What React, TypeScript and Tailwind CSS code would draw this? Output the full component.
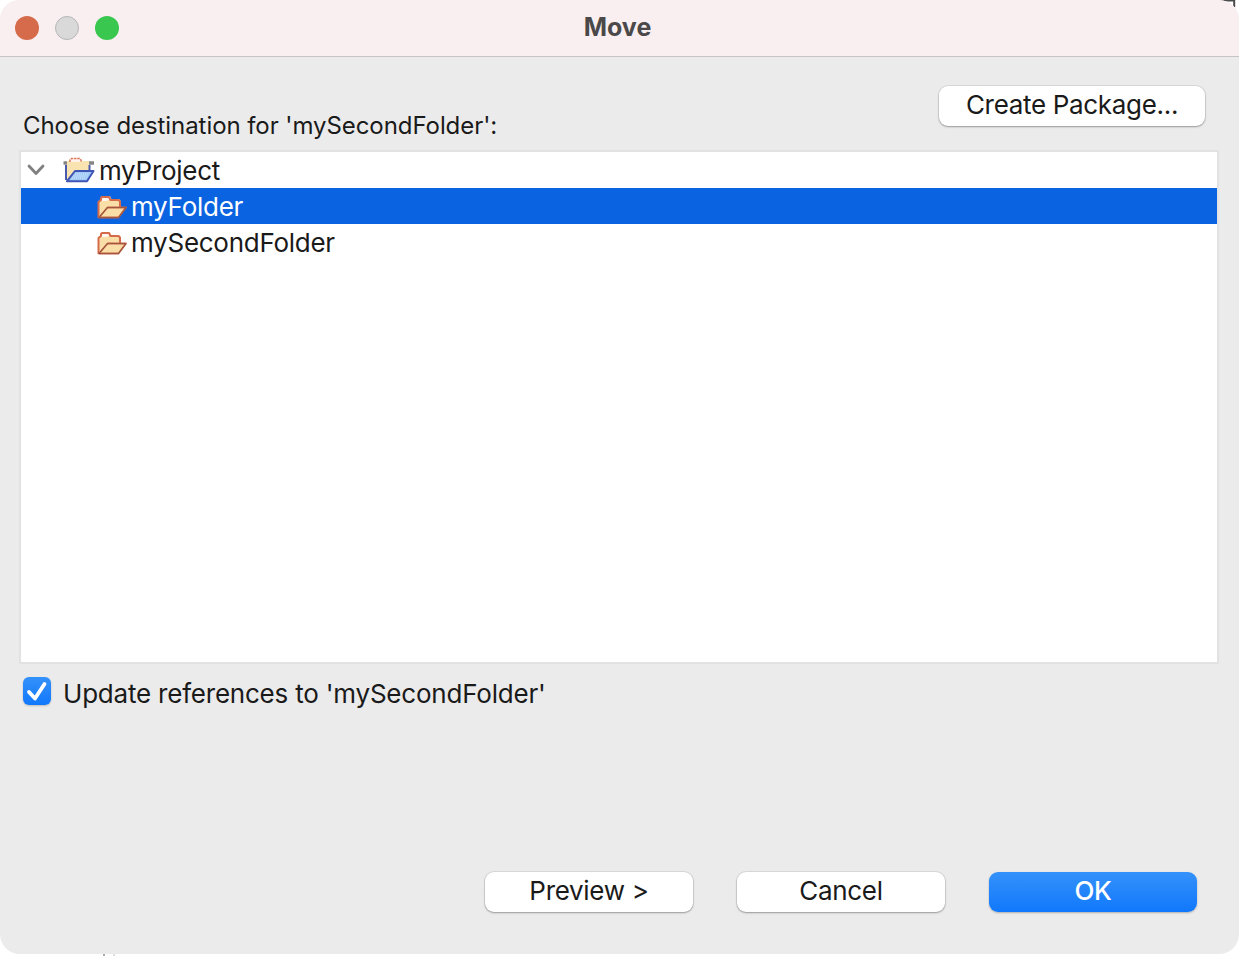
import type { ReactNode } from 'react';

function ProjectIcon() {
  return (
    <svg width="32" height="26" viewBox="0 0 32 26" className="shrink-0">
      <path d="M0.500 6H31" stroke="#858585" strokeWidth="3.600" />
      <path d="M4 4h3l1.500-2h8L18 4h8v11L4 24z" fill="#f9e3b0" />
      <path d="M7 5V3l1.500-1.500h8L18 3v2z" fill="#fff1ec" />
      <path d="M7 5V3l1.500-1.500h8L18 3v2" fill="none" stroke="#dc7a5d" strokeWidth="1.600" strokeDasharray="2.500 0.800" />
      <path d="M3 8v15M26.500 8v5" fill="none" stroke="#4a5aae" strokeWidth="2" />
      <path d="M4 24.200L12 14H30.500L24 24.200z" fill="#a4cbf5" stroke="#3f55b5" strokeWidth="2" strokeLinejoin="round" />
      <path d="M12 17h14M10.500 19h14M9 21h14" stroke="#d0e6ff" strokeWidth="1" strokeDasharray="1 1" />
    </svg>
  );
}

function FolderIcon() {
  return (
    <svg width="32" height="26" viewBox="0 0 32 26" className="mt-1 shrink-0">
      <path d="M3 22.500L2 6.500L4.500 4V2.500L6 1h8l1.500 3H23l1.500 1.500V12L5 23z" fill="#f9dfa7" />
      <path d="M5.500 2.500h8v2l-3 1.500H5z" fill="#fff7f2" />
      <path d="M2.500 23V7L5 5V3l1-1h7l1.500 3h8L24 6.500V12" fill="none" stroke="#d66b4c" strokeWidth="2" strokeLinejoin="round" />
      <path d="M3 22.500L11.500 12.500H30L22.500 22.500z" fill="#f9dfa7" stroke="#c86042" strokeWidth="1.800" strokeLinejoin="round" />
      <path d="M3 22.500L11.500 12.500H30L22.500 22.500z" fill="none" stroke="#594a42" strokeOpacity="0.7" strokeWidth="1.200" strokeDasharray="1 1" />
    </svg>
  );
}

function Button({ children, className }: { children: ReactNode; className: string }) {
  return (
    <button
      className={`flex h-10 items-center justify-center rounded-[9px] pb-[2px] text-[26px] leading-none whitespace-nowrap ${className}`}
    >
      {children}
    </button>
  );
}

const plain = 'bg-white shadow-[0_0_0_1px_rgba(0,0,0,0.07),0_1px_2px_rgba(0,0,0,0.3)]';

export default function App() {
  return (
    <div className="relative h-[956px] w-[1240px] overflow-hidden bg-white font-['Inter','Liberation_Sans',sans-serif] text-[#1a1a1a]">
      <svg width="24" height="8" viewBox="0 0 24 8" className="absolute top-0 left-[1216px]">
        <path d="M2 0.500H18.200V7" fill="none" stroke="#4a4a4a" strokeWidth="2" />
      </svg>
      <svg width="14" height="2" viewBox="0 0 14 2" className="absolute top-[954px] left-[102px]">
        <path d="M1 0h2v2H1z" fill="#a8a8a8" />
        <path d="M11 0h2v2h-2z" fill="#dedede" />
      </svg>
      <div className="relative flex h-[954px] w-[1239px] flex-col overflow-hidden rounded-[20px] bg-[#ebebeb]">
        <header className="grid h-[57px] shrink-0 grid-cols-3 items-center border-b border-[#c8c3c5] bg-[#f9eff0]">
          <div className="flex gap-4 pl-[15px]">
            <span className="size-6 rounded-full bg-[#d66b4c]" />
            <span className="size-6 rounded-full border border-[#b5b5b7] bg-[#d9d9d9]" />
            <span className="size-6 rounded-full bg-[#39c750]" />
          </div>
          <h1 className="pr-[4px] pb-[2px] text-center text-[25px] leading-none font-bold text-[#4a4848]">Move</h1>
        </header>

        <div className="flex h-[93px] shrink-0 items-start justify-between pr-[34px] pl-[23px]">
          <label className="pt-[57px] text-[24px] leading-6 tracking-[-0.07px] whitespace-nowrap">
            Choose destination for 'mySecondFolder':
          </label>
          <Button className={`mt-[29px] w-[266px] tracking-[-0.32px] ${plain}`}>Create Package...</Button>
        </div>

        <div className="mr-5 ml-[19px] h-[514px] shrink-0 border-2 border-[#e2e2e2] bg-white text-[26px] leading-9 tracking-[-0.27px]">
          <div className="flex h-9 items-center pl-[6px]">
            <svg width="18" height="12" viewBox="0 0 18 12" className="mr-[18px] shrink-0">
              <path d="M2 2l7 7.500L16 2" fill="none" stroke="#808080" strokeWidth="2.800" strokeLinecap="round" strokeLinejoin="round" />
            </svg>
            <ProjectIcon />
            <span className="ml-1 pt-[2px]">myProject</span>
          </div>
          <div className="flex h-9 items-center bg-[#0a63e0] pl-[75px] text-white">
            <FolderIcon />
            <span className="ml-[3px] pt-[2px]">myFolder</span>
          </div>
          <div className="flex h-9 items-center pl-[75px]">
            <FolderIcon />
            <span className="ml-[3px] pt-[2px]">mySecondFolder</span>
          </div>
        </div>

        <div className="flex h-[60px] shrink-0 items-start pt-[13px] pl-[23px]">
          <span className="flex size-7 items-center justify-center rounded-[6px] bg-linear-to-b from-[#3391fa] to-[#0f78fc] shadow-[0_1px_2px_rgba(0,0,0,0.2)]">
            <svg width="28" height="28" viewBox="0 0 28 28">
              <path d="M6 15l6 6.500L21.500 7" fill="none" stroke="white" strokeWidth="3.800" strokeLinecap="round" strokeLinejoin="round" />
            </svg>
          </span>
          <span className="ml-3 pt-1 text-[26px] leading-[26px] tracking-[-0.21px] whitespace-nowrap">
            Update references to 'mySecondFolder'
          </span>
        </div>

        <footer className="mt-auto mb-[42px] flex justify-end gap-11 pr-[42px]">
          <Button className={`w-52 tracking-[-0.3px] ${plain}`}>Preview &gt;</Button>
          <Button className={`w-52 tracking-[-0.3px] ${plain}`}>Cancel</Button>
          <Button className="w-52 bg-linear-to-b from-[#3391fa] to-[#0f78fc] font-medium tracking-[-0.4px] text-white shadow-[0_1px_2px_rgba(0,0,0,0.25)]">OK</Button>
        </footer>
      </div>
    </div>
  );
}
